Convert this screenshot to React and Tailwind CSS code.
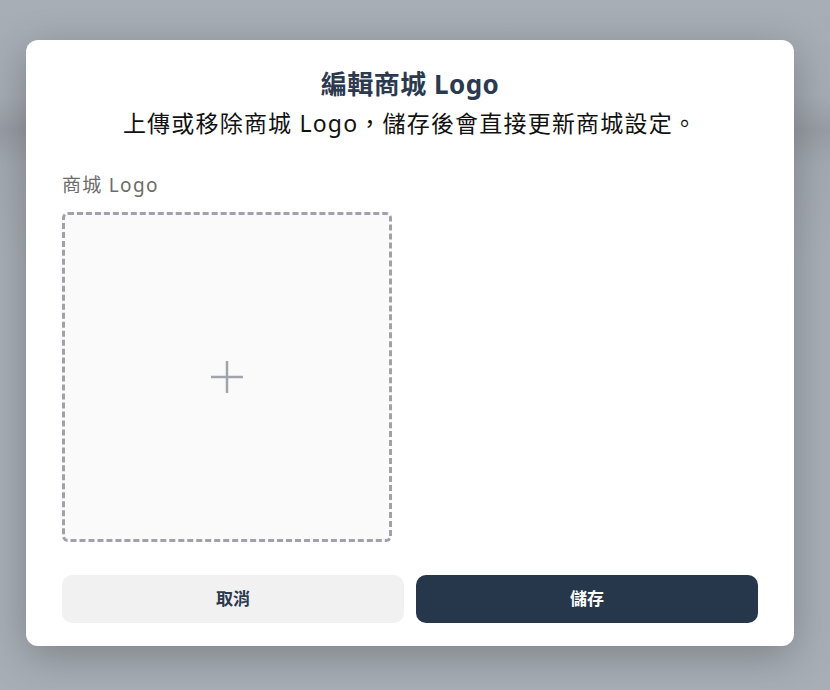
export default function App() {
  return (
    <div
      className="w-[830px] h-[690px] overflow-hidden pt-[40px] pl-[26px] bg-[linear-gradient(to_bottom,#a8aeb6_0px,#a6acb4_95px,#989da5_130px,#a3a9b1_165px,#a8aeb6_260px,#a8aeb6_100%)]"
      style={{ fontFamily: '"Noto Sans", "Noto Sans CJK TC", sans-serif' }}
    >
      <div className="w-[768px] h-[606px] bg-white rounded-[12px] shadow-[0_10px_40px_rgba(0,0,0,0.25)] px-[36px] pt-[26px] pb-[23px] flex flex-col">
        <div className="text-center text-[26px] tracking-[0.5px] font-bold leading-[36px] text-[#2b3a4f]">編輯商城 Logo</div>
        <div className="text-center text-[23px] tracking-[1.2px] leading-[34px] text-[#111] mt-[4px]">上傳或移除商城 Logo，儲存後會直接更新商城設定。</div>
        <div className="mt-[31px] text-[19px] tracking-[1.3px] leading-[28px] text-[#6b6b6b]">商城 Logo</div>
        <div className="mt-[13px] w-[330px] h-[330px] rounded-[6px] border-[3px] border-dashed border-[#a1a1ab] bg-[#fafafa] flex items-center justify-center">
          <svg width="36" height="36" viewBox="0 0 36 36" fill="none" stroke="#a1a4ad" strokeWidth="2.5">
            <path d="M18 2v32M2 18h32" />
          </svg>
        </div>
        <div className="mt-auto flex gap-[12px]">
          <button className="flex-1 h-[48px] rounded-[10px] bg-[#f1f1f1] text-[17px] font-bold text-[#2b3a4f]">取消</button>
          <button className="flex-1 h-[48px] rounded-[10px] bg-[#27374b] text-[17px] font-bold text-white">儲存</button>
        </div>
      </div>
    </div>
  );
}
